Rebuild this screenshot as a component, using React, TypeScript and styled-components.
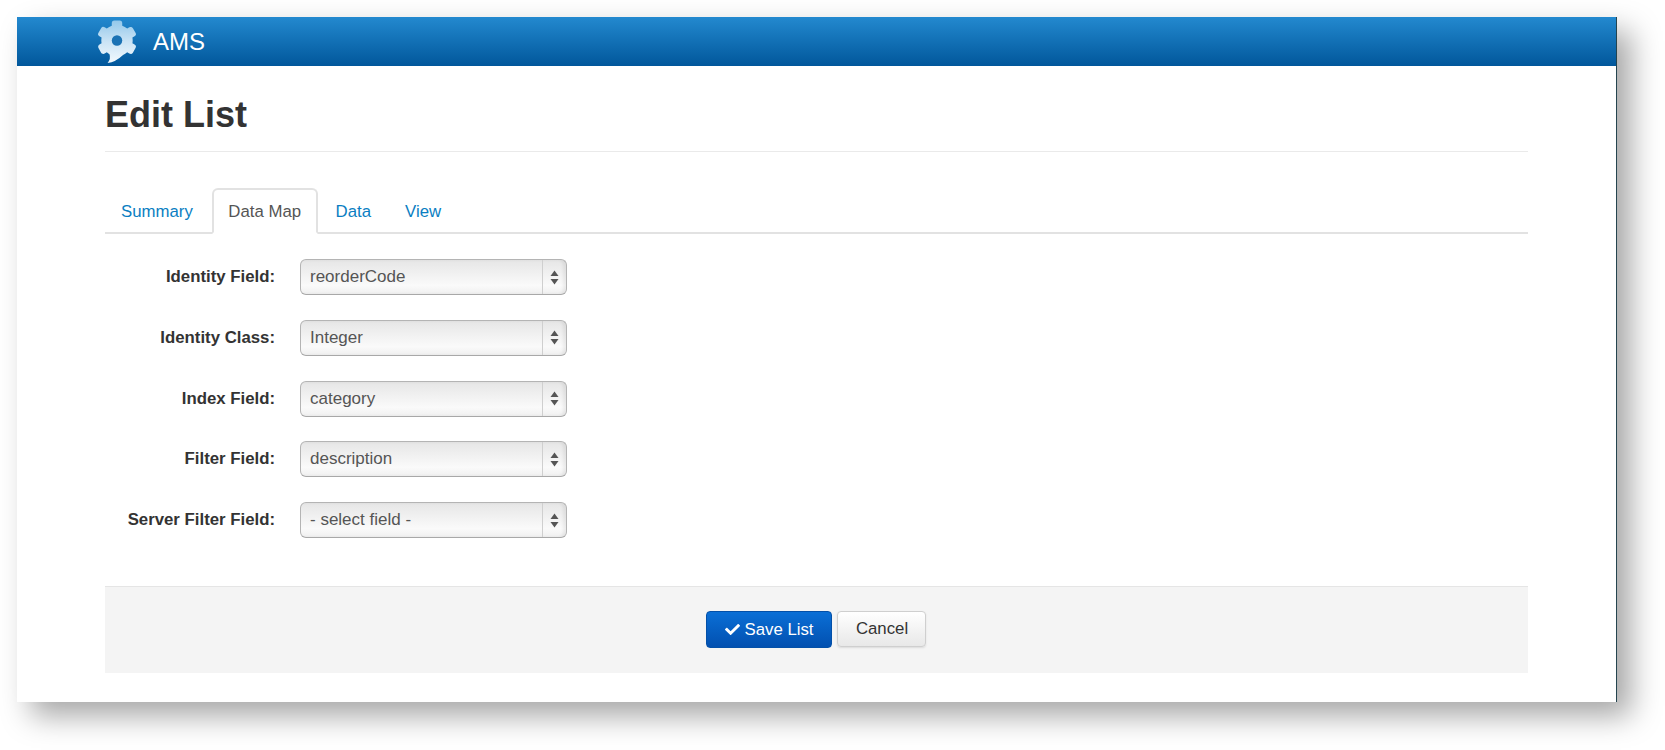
import React from 'react'
import styled, { createGlobalStyle } from 'styled-components'
import { FaCheck } from 'react-icons/fa'

const fields = [
  { label: 'Identity Field:', value: 'reorderCode' },
  { label: 'Identity Class:', value: 'Integer' },
  { label: 'Index Field:', value: 'category' },
  { label: 'Filter Field:', value: 'description' },
  { label: 'Server Filter Field:', value: '- select field -' },
]

const tabs = ['Summary', 'Data Map', 'Data', 'View']

const toothAngles = [0, 60, 120, 240, 300]

const GearLogo = () => (
  <svg width="46" height="46" viewBox="0 0 44 44">
    <defs>
      <linearGradient id="gearFill" x1="0" y1="0" x2="0" y2="1">
        <stop offset="0" stopColor="#8fc6ea" />
        <stop offset="0.5" stopColor="#cbe4f5" />
        <stop offset="1" stopColor="#f6fbfe" />
      </linearGradient>
      <clipPath id="gearShape">
        <circle cx="22" cy="20.500" r="15" />
        {toothAngles.map((angle) => (
          <rect key={angle} x="17" y="1.500" width="10" height="12" rx="2.500" transform={`rotate(${angle} 22 20.500)`} />
        ))}
        <path d="M14 32 Q17 37 13 42 Q22 41 30 32 Z" />
      </clipPath>
    </defs>
    <rect width="44" height="44" fill="url(#gearFill)" clipPath="url(#gearShape)" />
    <circle cx="22" cy="20.500" r="5" fill="#1a72b4" />
  </svg>
)

const SelectArrows = () => (
  <svg width="9" height="15" viewBox="0 0 9 15">
    <path d="M4.500 0.500 L8.500 6 H0.500 Z" fill="#555" />
    <path d="M4.500 14.500 L8.500 9 H0.500 Z" fill="#555" />
  </svg>
)

const App = () => (
  <>
    <GlobalStyle />
    <SWindow>
      <SNavbar>
        <GearLogo />
        <SBrand>AMS</SBrand>
      </SNavbar>
      <SContent>
        <STitle>Edit List</STitle>
        <STabs>
          {tabs.map((tab) => (
            <STab key={tab} $active={tab === 'Data Map'}>
              {tab}
            </STab>
          ))}
        </STabs>
        <SForm>
          {fields.map(({ label, value }) => (
            <SRow key={label}>
              <SLabel>{label}</SLabel>
              <SSelect>
                <SSelectValue>{value}</SSelectValue>
                <SSelectToggle>
                  <SelectArrows />
                </SSelectToggle>
              </SSelect>
            </SRow>
          ))}
        </SForm>
        <SFooter>
          <SSaveButton>
            <FaCheck size={15} />
            Save List
          </SSaveButton>
          <SCancelButton>Cancel</SCancelButton>
        </SFooter>
      </SContent>
    </SWindow>
  </>
)

const GlobalStyle = createGlobalStyle`
  html {
    overflow: hidden;
  }

  body {
    margin: 0;
    background: #fff;
    font-family: "Liberation Sans", Arial, sans-serif;
    font-size: 16.8px;
    color: #333;
  }

  #root {
    height: 750px;
    box-sizing: border-box;
    padding: 17px 0 0 17px;
  }
`

const SWindow = styled.div`
  width: 1599px;
  height: 685px;
  background: #fff;
  border-right: 1px solid #24444f;
  box-shadow: 14px 14px 28px rgba(0, 0, 0, 0.35);
`

const SNavbar = styled.div`
  height: 49px;
  box-sizing: border-box;
  display: flex;
  align-items: center;
  gap: 13px;
  padding: 0 0 0 77px;
  background: linear-gradient(#2389cf, #01579b);
`

const SBrand = styled.span`
  color: #fff;
  font-size: 24px;
  font-weight: 400;
`

const SContent = styled.div`
  margin: 0 88px;
  display: flex;
  flex-direction: column;
`

const STitle = styled.h1`
  margin: 0 0 36px;
  height: 86px;
  box-sizing: border-box;
  padding-top: 27px;
  border-bottom: 1px solid #eaeaea;
  font-size: 36px;
  line-height: 44px;
  font-weight: 700;
  color: #333;
`

const STabs = styled.div`
  display: flex;
  height: 46px;
  box-sizing: border-box;
  border-bottom: 2px solid #e2e2e2;
`

const STab = styled.a<{ $active?: boolean }>`
  height: 46px;
  box-sizing: border-box;
  margin-right: 2px;
  padding: 12px ${({ $active }) => ($active ? '14.5px' : '14px')} 0;
  line-height: 20px;
  background: ${({ $active }) => ($active ? '#fff' : 'transparent')};
  color: ${({ $active }) => ($active ? '#555' : '#0a7ec2')};
  border: 2px solid ${({ $active }) => ($active ? '#e2e2e2' : 'transparent')};
  border-bottom-color: ${({ $active }) => ($active ? '#fff' : 'transparent')};
  border-radius: 6px 6px 0 0;

  &:first-child {
    margin-right: 3px;
  }
`

const SForm = styled.div`
  display: flex;
  flex-direction: column;
  gap: 24.75px;
  padding: 25px 0 48px;
`

const SRow = styled.div`
  display: flex;
  align-items: center;
`

const SLabel = styled.label`
  width: 170px;
  margin-right: 25px;
  text-align: right;
  font-weight: 700;
  color: #333;
`

const SSelect = styled.div`
  width: 267px;
  height: 36px;
  box-sizing: border-box;
  display: flex;
  align-items: stretch;
  border: 1px solid #b4b4b4;
  border-bottom-color: #a8a8a8;
  border-radius: 6px;
  background: linear-gradient(#e6e6e6, #fafafa 75%, #f0f0f0);
  box-shadow: inset -3px 0 3px rgba(0, 0, 0, 0.06);
`

const SSelectValue = styled.span`
  flex: 1;
  padding-left: 9px;
  font-size: 17px;
  line-height: 33px;
  color: #555;
`

const SSelectToggle = styled.span`
  width: 23px;
  display: flex;
  align-items: center;
  justify-content: center;
  border-left: 1px solid #cfcfcf;
`

const SFooter = styled.div`
  height: 87px;
  display: flex;
  align-items: flex-start;
  justify-content: center;
  gap: 5px;
  padding: 24px 2px 0 0;
  background: #f4f4f4;
  border-top: 1px solid #e5e5e5;
  box-sizing: border-box;
`

const SSaveButton = styled.button`
  width: 126px;
  height: 37px;
  display: flex;
  align-items: center;
  justify-content: center;
  gap: 4px;
  padding: 0 0 0 2px;
  font: inherit;
  color: #fff;
  background: linear-gradient(#0a6fd6, #0250b0);
  border: 1px solid #0350a8;
  border-radius: 4px;
`

const SCancelButton = styled.button`
  width: 89px;
  height: 36px;
  padding: 0 0 0 2px;
  font: inherit;
  color: #333;
  background: linear-gradient(#fff, #e8e8e8);
  border: 1px solid #cfcfcf;
  border-radius: 4px;
  box-shadow: 0 1px 2px rgba(0, 0, 0, 0.1);
`

export default App
